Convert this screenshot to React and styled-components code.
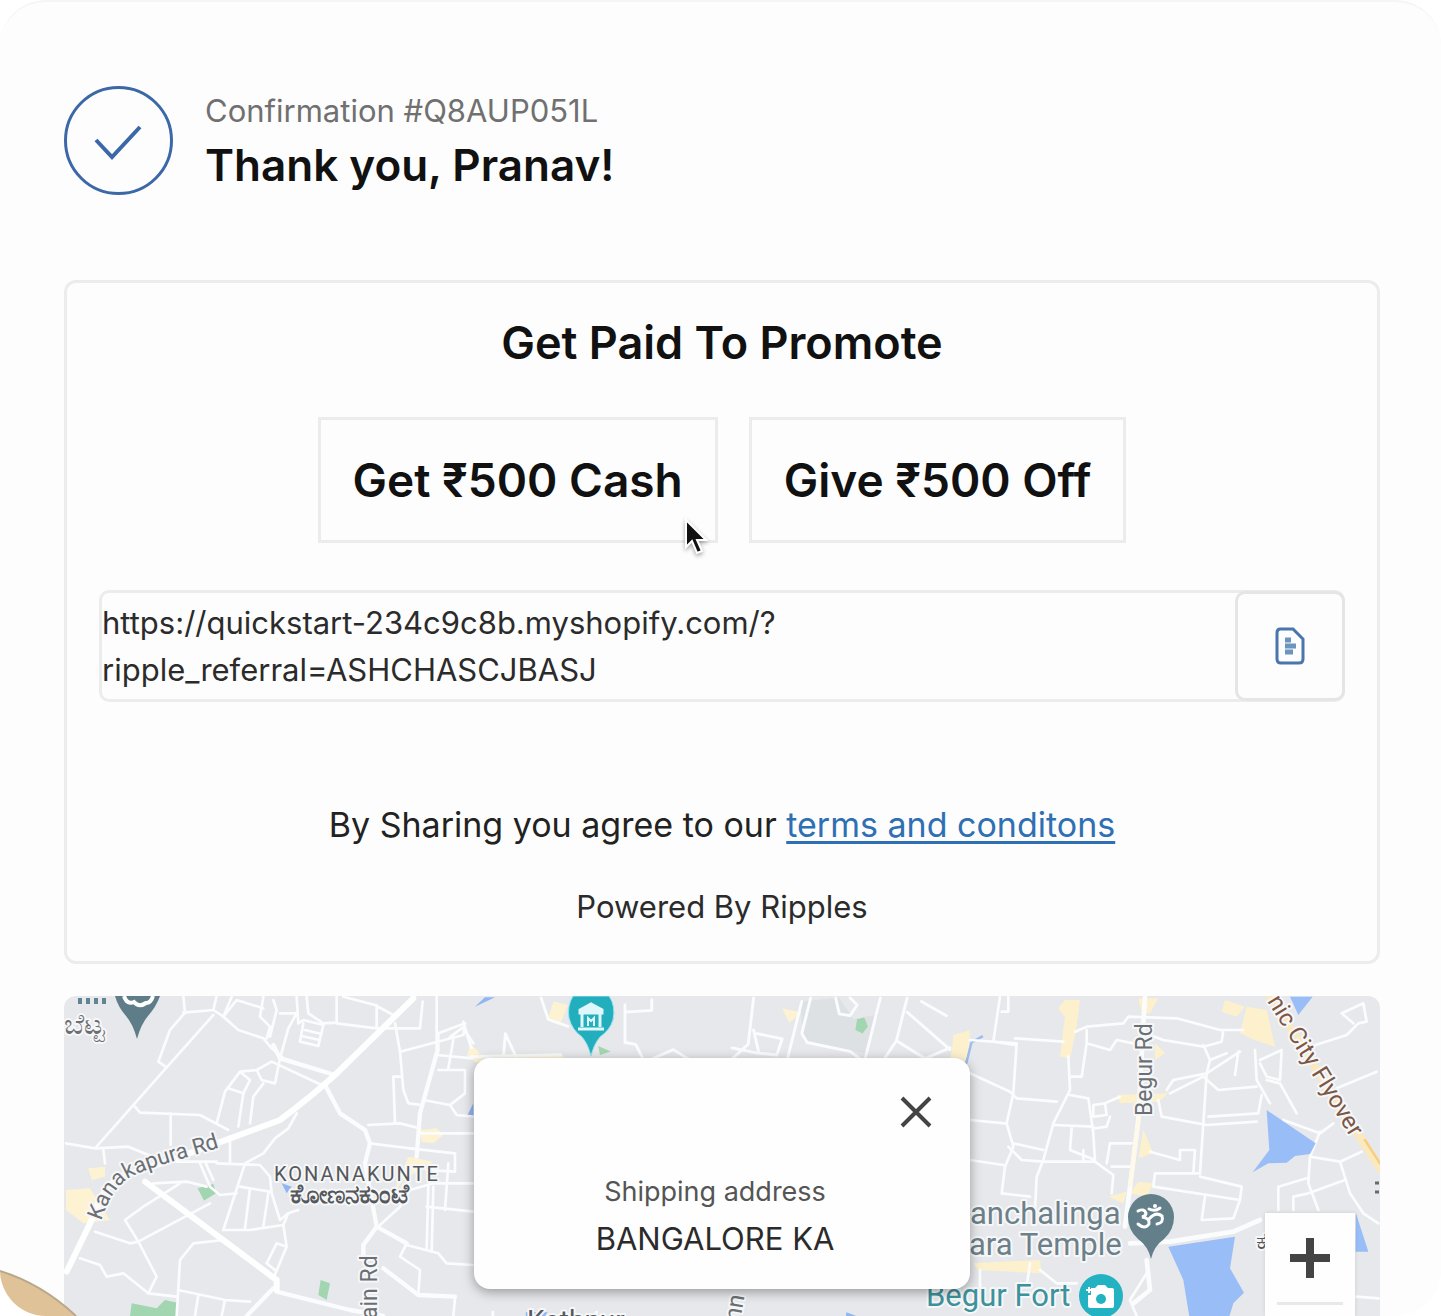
import React from "react";
import styled, { createGlobalStyle } from "styled-components";

const GlobalStyle = createGlobalStyle`
  *, *::before, *::after { box-sizing: border-box; }
  body { margin: 0; background: #ffffff; }
  h1, h2, p { margin: 0; font-weight: inherit; }
  button, textarea { font: inherit; color: inherit; }
`;

const Page = styled.main`
  position: relative;
  min-height: 100vh;
  padding: 83px 61px 0 64px;
  border-top: 2px solid #f5f5f5;
  border-radius: 46px;
  overflow: hidden;
  background: #fdfdfd;
  color: #111111;
  font-family: Inter, "Liberation Sans", sans-serif;
`;

const Header = styled.header`
  display: flex;
  align-items: center;
  gap: 32px;
  margin-bottom: 85px;
`;

const CheckIcon = styled.svg`
  flex: none;
  width: 109px;
  height: 109px;
`;

const HeaderText = styled.div`
  display: flex;
  flex-direction: column;
  padding-top: 2px;
`;

const Confirmation = styled.p`
  color: #707070;
  font-size: 31px;
  line-height: 48px;
`;

const Title = styled.h1`
  font-size: 44px;
  font-weight: 600;
  line-height: 60px;
`;

const Card = styled.section`
  display: flex;
  flex-direction: column;
  align-items: center;
  margin-bottom: 32px;
  padding: 30px 32px;
  border: 3px solid #ececec;
  border-radius: 12px;
`;

const CardTitle = styled.h2`
  font-size: 45px;
  font-weight: 600;
  line-height: 60px;
`;

const Offers = styled.div`
  display: flex;
  flex-wrap: wrap;
  justify-content: center;
  gap: 31px;
  margin: 44px 0 47px;
`;

const Offer = styled.button`
  position: relative;
  padding: 30px 32px;
  border: 3px solid #ececec;
  background: transparent;
  font-size: 46px;
  font-weight: 600;
  line-height: 60px;
`;

const Pointer = styled.svg`
  position: absolute;
  right: 5px;
  bottom: -16px;
  width: 26px;
  height: 40px;
  overflow: visible;
`;

const LinkRow = styled.div`
  display: flex;
  align-self: stretch;
  border: 3px solid #ececec;
  border-radius: 10px;
`;

const LinkBox = styled.textarea`
  flex: 1;
  min-width: 0;
  height: 106px;
  padding: 6px 0;
  border: 0;
  outline: 0;
  resize: none;
  overflow: hidden;
  background: transparent;
  color: #2b2b2b;
  font-size: 31px;
  line-height: 47px;
`;

const CopyButton = styled.button`
  display: flex;
  align-items: center;
  justify-content: center;
  width: 110px;
  margin: -2px -3px -2px 0;
  padding: 0;
  border: 3px solid #e5e5e5;
  border-radius: 10px;
  background: #fdfdfd;
`;

const Terms = styled.p`
  margin-top: 99px;
  color: #222222;
  font-size: 34px;
  line-height: 48px;
`;

const TermsLink = styled.a`
  color: #2f6fb3;
  text-decoration: underline;
  text-decoration-thickness: 3px;
  text-underline-offset: 4px;
`;

const Powered = styled.p`
  margin-top: 34px;
  color: #2b2b2b;
  font-size: 31px;
  line-height: 48px;
`;

const MapPanel = styled.section`
  position: relative;
  height: 320px;
  border-radius: 12px 12px 0 0;
  overflow: hidden;
  background: #e6e8eb;
`;

const MapDrawing = styled.svg`
  display: block;
  width: 100%;
  height: 100%;
`;

const Popup = styled.div`
  position: absolute;
  top: 62px;
  left: 50%;
  display: flex;
  flex-direction: column;
  width: 496px;
  height: 231px;
  padding: 34px 34px 27px 20px;
  border-radius: 16px;
  transform: translateX(-50%);
  background: #fefefe;
  box-shadow: 0 3px 12px rgba(0, 0, 0, 0.35);
  text-align: center;
`;

const CloseButton = styled.button`
  align-self: flex-end;
  width: 40px;
  height: 40px;
  padding: 0;
  border: 0;
  background: transparent;
`;

const PopupLabel = styled.p`
  margin-top: 36px;
  color: #555555;
  font-size: 27px;
  line-height: 47px;
`;

const PopupPlace = styled.p`
  color: #2b2b2b;
  font-size: 31px;
  line-height: 47px;
`;

const ZoomControl = styled.div`
  position: absolute;
  right: 25px;
  bottom: 0;
  width: 90px;
  height: 103px;
  padding: 0 12px;
  background: #fefefe;
  box-shadow: 0 0 4px rgba(0, 0, 0, 0.12);
`;

const ZoomButton = styled.button`
  display: flex;
  align-items: center;
  justify-content: center;
  width: 100%;
  height: 92px;
  padding: 0;
  border: 0;
  border-bottom: 3px solid #e8e8e8;
  background: transparent;
`;

const CornerShape = styled.svg`
  position: absolute;
  left: 0;
  bottom: 0;
  width: 80px;
  height: 48px;
`;

const MapLabel = styled.text`
  fill: ${(p) => p.$color || "#6b6f74"};
  font-family: Roboto, "Noto Sans", sans-serif;
  font-size: ${(p) => p.$size || 28}px;
  font-weight: ${(p) => p.$weight || 400};
  letter-spacing: ${(p) => p.$tracking || 0}px;
  paint-order: stroke;
  stroke: #f6f7f8;
  stroke-width: 4px;
  stroke-linejoin: round;
`;

const minorWest = [
  "M400 50L405 98L360 150L325 245L350 262",
  "M400 98L490 90L500 48M490 90L520 110L565 150L640 175L665 205L700 235L855 285",
  "M490 105L350 262L135 505M48 490L135 505L235 500L345 545L500 545",
  "M255 380L270 398L450 405L535 450M362 400V495M540 470V545",
  "M545 50L520 110M520 110L560 60L640 85M640 50L630 110L660 140L650 175M670 60L680 90L660 170M690 100L740 100L715 145L690 235M740 50L745 130M745 130L760 120L820 135L805 198L750 185L760 130M765 150L815 162M755 168L808 180",
  "M860 50V130L980 145H1110L1118 65M770 50L775 100L820 130L860 128M880 50L975 75L1030 105M980 75V140",
  "M1035 130L1050 215L1240 165L1245 130L1165 160V215M1050 215L1060 330L1075 370L1115 375M1055 290H1030L1035 430",
  "M690 235L675 310L635 300L620 270L665 245L815 315M620 270L570 275L525 335L500 430M570 275L600 300L580 340L535 325M580 340L565 440M640 310L610 350L600 430",
  "M740 400L715 445L675 475L640 520L585 550L520 750M500 550L630 555L660 590L665 640L690 720L715 700L745 690M600 625L585 745M655 640L640 740M570 620L660 635",
  "M520 750H600L700 735L715 700M700 735L710 800L670 895M710 800L680 790L650 850L675 870",
  "M160 510L165 550M450 550L480 620L510 645L560 640M465 545L490 600M310 610L410 605L470 620M390 610L280 680L225 720L265 785L320 890L295 940M265 785L240 790L135 755M265 785L480 670",
  "M90 835L150 855L170 890L220 880L295 940L380 950M380 1008L390 840L430 790L520 780M385 930L525 960L600 965M445 945L435 1008M525 960L515 1008",
  "M955 435L1050 430L1110 445M960 490L1080 505L1215 520V575L1130 570M1120 360L1200 375L1245 340V270H1165M1160 225L1270 235M1160 50V220M1210 180L1195 265M1200 375L1220 405L1270 410M1110 460H1270",
  "M990 735L1050 680L1080 630L1150 610H1270M1135 620L1130 810M1150 620L1145 815M1130 680L1270 695M1195 550L1185 690",
  "M1070 790L1050 830L1110 870L1105 945M1070 795L1165 820L1190 850L1270 855M1215 955L1210 1008M1240 125L1250 160L1270 190",
];

const majorWest = [
  "M670 195L690 235L855 285",
  "M825 315L870 400L945 450L960 490L945 550L980 740L940 795V830",
  "M980 740L1070 790M1000 865L1105 945L1215 950",
  "M1160 220L1110 400L1100 530",
  "M670 925L590 1008M680 935L900 990L1000 1008",
];

const minorNorth = [
  "M0 160L40 130L60 190M150 210L155 150L185 215M255 50L275 110L330 130M490 70V175L520 180L545 230M490 90L565 85V55M545 230L625 195L690 235",
  "M310 210L60 215M850 50L835 180L780 230M850 140L865 205L915 210L930 165L860 150M790 190L860 205M985 60L945 220",
  "M1010 50L985 150L1000 175L1120 200L1160 230M1080 50L1090 95L1120 100L1140 70L1120 50M1205 50L1160 230M1280 50L1250 170L1210 230M1320 60L1390 100M1250 170L1330 220L1400 190M1280 90L1400 195",
];

const minorEast = [
  "M150 50L130 185L195 195M155 95H175V50M60 180L200 190L190 340L170 430L190 500L165 560L155 640L240 650M195 175L340 185",
  "M60 280L180 335L200 355L320 365M355 230L360 330L310 430L280 540L260 590L255 690M60 420L165 430M60 540L160 555",
  "M365 290H395L410 190L480 210L500 180L550 190M375 155L410 140L520 130L535 110L680 115L810 150H880M410 150V195",
  "M600 165L640 180L760 200L815 185L820 150M760 195L780 240L770 280L750 580L615 580L610 620L870 660L875 620L750 590M765 650L755 720L850 715L870 660",
  "M360 345L415 355L430 460L435 545L490 585L485 640M310 435L430 440M365 445L360 510L435 540M400 510V545M280 545H435M190 490L280 510M175 500L215 540L280 545",
  "M430 375L465 370L470 405L430 410ZM465 370L510 350M470 550L480 490L545 490M485 560H540M435 445L470 440L480 410",
  "M600 515L690 540V510H735L730 580M625 360L635 410L770 435L920 425M775 410L925 400L935 345M650 330L670 300L770 280L870 215M780 240L830 220M660 340L760 290L805 330L920 320",
  "M865 215L855 285M915 210L920 300L960 370M950 300L990 310L1040 400M930 240L995 210L990 300L950 290L930 250",
  "M1080 200L1190 165L1225 130L1250 125L1240 70L1175 100L1210 130M1160 325L1280 275",
  "M1000 420L1110 460L1150 430M1110 455L1080 530L1075 610L1105 690M1080 530L1170 545L1235 515M1170 545L1200 640L1240 700L1285 730M1075 640L1185 600M985 690V620L1070 595M1030 690V650L1075 640",
  "M90 870V920M240 850L230 920M270 870L320 910H380M590 880L540 960L560 1008M1220 950L1285 955",
];

const majorEast = [
  "M585 50L580 130L565 420L540 620L525 740",
  "M540 790L660 785L850 755L930 720",
  "M590 840L600 930L550 970",
];

function Roads({ paths, width }) {
  return (
    <g fill="none" stroke="#fbfcfd" strokeWidth={width} strokeLinejoin="round" strokeLinecap="round">
      {paths.map((d) => (
        <path key={d} d={d} />
      ))}
    </g>
  );
}

function DeliveryMap() {
  return (
    <MapDrawing viewBox="64 996 1316 320" preserveAspectRatio="xMidYMin slice" role="img" aria-label="Map of Bangalore">
      <defs>
        <path id="kanakapura" d="M101 1221C107 1204 113 1189 129 1178C153 1165 182 1160 240 1141" />
        <path id="flyover" d="M1267 1001L1374 1176" />
      </defs>

      <g transform="translate(50 980) scale(0.33333)">
        <g fill="#fdf3d3">
          <path d="M115 565L165 560V590L125 600ZM48 630L120 625L160 690L180 720L100 730L48 690Z" />
          <path d="M1110 450L1160 445L1180 465L1150 490L1115 485ZM1075 530L1150 545L1060 600L1030 640ZM1260 190L1290 220L1250 240Z" />
        </g>
        <g fill="#a2d6b0">
          <path d="M443 625L490 612L498 640L462 662ZM812 900L840 910L830 960L805 945ZM245 970L320 985L345 960L382 968V1008H240Z" />
        </g>
        <path d="M1275 80L1305 52H1335ZM1250 410L1270 370V415ZM695 610L725 620L710 640Z" fill="#8fb5f3" />
        <Roads paths={minorWest} width={8} />
        <Roads paths={majorWest} width={13} />
        <g fill="none" stroke="#ffffff" strokeWidth="18" strokeLinecap="round">
          <path d="M1090 55L855 285C800 335 750 375 690 420L500 490L350 545L210 590Q150 630 130 710L50 875" />
          <path d="M285 605L680 900V930" />
        </g>
      </g>

      <g transform="translate(450 980) scale(0.35714)">
        <path d="M980 60L1090 50L1130 110L1200 95L1160 205L990 170Z" fill="#dde1e3" />
        <path d="M290 60L330 70L310 120L275 105ZM60 210L310 205L330 230H70ZM840 220H940V240H840ZM930 80L985 90L950 120ZM1410 180L1455 150L1450 240L1400 220Z" fill="#fdf3d3" />
        <path d="M1140 110L1160 105L1170 130L1155 150L1135 140ZM415 185L450 200L420 210Z" fill="#a2d6b0" />
        <path d="M212 930H273L240 990L215 985ZM1110 930L1200 965L1260 960L1272 980L1250 1010H1098Z" fill="#8fb5f3" />
        <path d="M1460 175L1492 157M1445 235L1460 175" fill="none" stroke="#9dbcf0" strokeWidth="7" />
        <Roads paths={minorNorth} width={8} />
        <Roads paths={["M120 930V1010M410 930L385 1010M0 950L20 1010M850 950L820 1010"]} width={8} />
      </g>

      <g transform="translate(950 980) scale(0.33333)">
        <g fill="#fdf1cd">
          <path d="M345 60H390L380 140L360 235L330 230L345 110L325 85ZM565 55H625L600 100H575Z" />
          <path d="M825 60L885 80L860 110L815 95ZM890 80L950 90L975 200L915 180L870 160ZM615 190L645 220L615 240ZM500 345L655 340L625 365L510 370Z" />
          <path d="M580 450L610 520L565 535ZM565 605L610 610L590 650L540 640ZM475 650L530 635L520 670ZM70 850L270 840L275 880L85 870Z" />
          <path d="M10 165L60 150L50 230L5 225Z" />
        </g>
        <Roads paths={minorEast} width={8} />
        <Roads paths={majorEast} width={14} />
        <path d="M575 300L565 420L540 620" fill="none" stroke="#fef9e8" strokeWidth="13" />
        <path d="M950 390L1097 490L1080 522L1035 528L1010 548L955 550L908 577L958 510ZM655 800L855 770L840 865L882 938L850 970L838 1010H718L700 900ZM1020 50H1088L1045 105ZM1218 700L1255 815H1217Z" fill="#98bdf7" />
        <g fill="none" strokeLinecap="round">
          <path d="M960 50L1290 565" stroke="#fbe8bd" strokeWidth="24" />
          <path d="M1245 480L1290 550" stroke="#f5ce7e" strokeWidth="7" />
        </g>
      </g>

      <MapLabel $size={22}>
        <textPath href="#kanakapura">Kanakapura Rd</textPath>
      </MapLabel>
      <MapLabel $size={20} $tracking={2} $color="#55585c" x="274" y="1181">KONANAKUNTE</MapLabel>
      <MapLabel $size={26} $weight={700} $color="#55585c" x="290" y="1203">ಕೋಣನಕುಂಟೆ</MapLabel>
      <MapLabel $size={28} x="64" y="1034">ಬೆಟ್ಟ</MapLabel>
      <MapLabel $size={23} transform="translate(377 1319) rotate(-90)">ain Rd</MapLabel>
      <MapLabel $size={23} transform="translate(1152 1116) rotate(-90)">Begur Rd</MapLabel>
      <MapLabel $size={24} $color="#7d5646">
        <textPath href="#flyover">nic City Flyover</textPath>
      </MapLabel>
      <MapLabel $size={31} $color="#6d8089" x="970" y="1224">anchalinga</MapLabel>
      <MapLabel $size={31} $color="#6d8089" x="969" y="1255">ara Temple</MapLabel>
      <MapLabel $size={31} $color="#3e929c" x="926" y="1306">Begur Fort</MapLabel>
      <MapLabel $size={28} $color="#55585c" x="527" y="1330">Kathnur</MapLabel>
      <MapLabel $size={24} transform="translate(740 1322) rotate(-80)">nn</MapLabel>
      <MapLabel $size={24} $color="#55585c" x="1256" y="1249">ಕ</MapLabel>

      <path d="M80 998V1004M88 998V1004M96 998V1004M104 998V1004" stroke="#5e8591" strokeWidth="4" />
      <path d="M115 996H160Q156 1007 148 1016Q141 1024 137 1039Q133 1024 126 1016Q118 1007 115 996Z" fill="#5f7d89" />
      <path d="M124 996Q127 1005 134 1002Q139 1008 146 1003Q151 1003 153 996" fill="none" stroke="#ffffff" strokeWidth="4" />
      <path d="M573 996H609Q616 1006 613 1020Q610 1030 600 1037Q594 1044 591 1056Q588 1044 582 1037Q572 1030 569 1018Q567 1006 573 996Z" fill="#22aebd" stroke="#9be4ec" />
      <path d="M580 1010L591 1004L602 1010V1013H580ZM582 1014V1027M600 1014V1027M578 1029H604" fill="#dff7fa" stroke="#dff7fa" strokeWidth="3" />
      <path d="M588 1026V1018L591 1021L594 1018V1026" fill="none" stroke="#dff7fa" strokeWidth="2" />
      <g>
        <path d="M1151 1259Q1148 1246 1138 1239Q1128 1230 1128 1217A23 23 0 0 1 1174 1217Q1174 1230 1164 1239Q1154 1246 1151 1259Z" fill="#637f8a" />
        <path d="M1138 1211Q1144 1208 1146 1213Q1146 1216 1142 1217Q1150 1218 1149 1224Q1145 1230 1138 1224M1149 1219Q1156 1211 1162 1216Q1164 1223 1157 1224M1149 1209Q1155 1212 1160 1208" fill="none" stroke="#ffffff" strokeWidth="3" strokeLinecap="round" />
        <circle cx="1155" cy="1206" r="2" fill="#ffffff" />
      </g>
      <g>
        <circle cx="1101" cy="1296" r="22" fill="#22b2c1" />
        <path d="M1091 1288H1095L1098 1285H1105L1108 1288H1112Q1114 1288 1114 1290V1306Q1114 1308 1112 1308H1090Q1088 1308 1088 1306V1295H1091Z" fill="#ffffff" />
        <circle cx="1101" cy="1299" r="5" fill="#22b2c1" />
        <path d="M1089 1287V1293M1086 1290H1092" stroke="#ffffff" strokeWidth="2" />
      </g>
      <path d="M1375 1183H1379M1375 1192H1379" stroke="#66696d" strokeWidth="3" />
    </MapDrawing>
  );
}

export default function App() {
  return (
    <>
      <GlobalStyle />
      <Page>
        <Header>
          <CheckIcon viewBox="0 0 109 109" fill="none" stroke="#3c68a8" strokeWidth="3" aria-hidden="true">
            <circle cx="54.5" cy="54.5" r="53" />
            <path d="M32 54L48 71L76 41" strokeWidth="4" />
          </CheckIcon>
          <HeaderText>
            <Confirmation>Confirmation #Q8AUP051L</Confirmation>
            <Title>Thank you, Pranav!</Title>
          </HeaderText>
        </Header>

        <Card>
          <CardTitle>Get Paid To Promote</CardTitle>
          <Offers>
            <Offer type="button">
              Get ₹500 Cash
              <Pointer viewBox="0 0 26 40" aria-hidden="true">
                <path d="M2 4V31L8 25L13 37L18 35L13 24H22Z" fill="#111111" stroke="#ffffff" strokeWidth="2" filter="drop-shadow(0 2px 2px rgba(0,0,0,.35))" />
              </Pointer>
            </Offer>
            <Offer type="button">Give ₹500 Off</Offer>
          </Offers>
          <LinkRow>
            <LinkBox
              aria-label="Referral link"
              readOnly
              spellCheck={false}
              value={"https://quickstart-234c9c8b.myshopify.com/?\nripple_referral=ASHCHASCJBASJ"}
            />
            <CopyButton type="button" aria-label="Copy link">
              <svg width="30" height="38" viewBox="0 0 30 38" fill="none" stroke="#4976ad" strokeWidth="3" aria-hidden="true">
                <path d="M5 2H18L28 12V32Q28 36 24 36H6Q2 36 2 32V6Q2 2 5 2Z" />
                <path d="M10 13H16M10 19H21M10 25H18" strokeWidth="5" stroke="#6c94bd" />
              </svg>
            </CopyButton>
          </LinkRow>
          <Terms>
            By Sharing you agree to our <TermsLink href="#terms">terms and conditons</TermsLink>
          </Terms>
          <Powered>Powered By Ripples</Powered>
        </Card>

        <MapPanel>
          <DeliveryMap />
          <Popup>
            <CloseButton type="button" aria-label="Close">
              <svg width="40" height="40" viewBox="0 0 40 40" stroke="#444444" strokeWidth="4" aria-hidden="true">
                <path d="M6 6L34 34M34 6L6 34" />
              </svg>
            </CloseButton>
            <PopupLabel>Shipping address</PopupLabel>
            <PopupPlace>BANGALORE KA</PopupPlace>
          </Popup>
          <ZoomControl>
            <ZoomButton type="button" aria-label="Zoom in">
              <svg width="42" height="42" viewBox="0 0 42 42" stroke="#444444" strokeWidth="8" aria-hidden="true">
                <path d="M21 1V41M1 21H41" />
              </svg>
            </ZoomButton>
          </ZoomControl>
        </MapPanel>

        <CornerShape viewBox="0 0 80 48" aria-hidden="true">
          <path d="M0 3Q42 16 76 48H0Z" fill="#dfc297" />
          <path d="M0 3Q42 16 76 48" fill="none" stroke="#b9a88c" strokeWidth="2" />
        </CornerShape>
      </Page>
    </>
  );
}
